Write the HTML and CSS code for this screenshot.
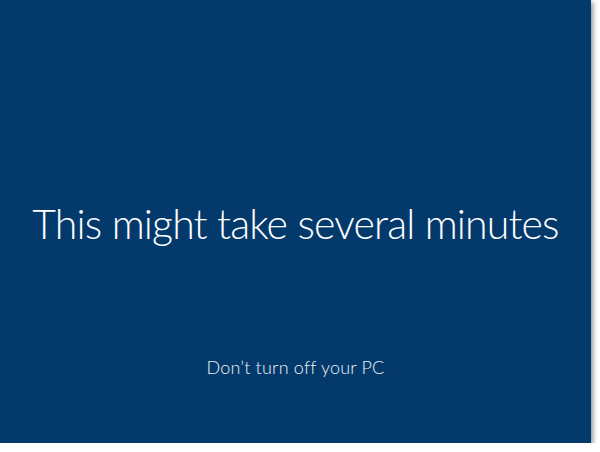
FILE: index.html
```html
<!DOCTYPE html>
<html lang="en">
<head>
    <meta charset="UTF-8">
    <title>This might take several minutes</title>
    <link rel="stylesheet" href="styles.css">
</head>
<body>
    <div class="screen">
        <h1 class="title">This might take several minutes</h1>
        <p class="subtitle">Don’t turn off your PC</p>
    </div>
</body>
</html>
```

FILE: styles.css
```css
body {
    margin: 0;
    background-color: #ffffff;
    font-family: Lato, "Open Sans", sans-serif;
}

.screen {
    width: 591px;
    height: 443px;
    background-color: #033a6b;
    box-shadow: 2px 2px 5px rgba(0, 0, 0, 0.45);
    display: flex;
    flex-direction: column;
    align-items: center;
    box-sizing: border-box;
    padding-top: 192px;
    color: #ffffff;
}

.title {
    margin: 0;
    font-size: 41px;
    font-weight: 300;
    line-height: 64px;
    letter-spacing: -0.85px;
    white-space: nowrap;
}

.subtitle {
    margin: 0;
    margin-top: 98px;
    font-size: 18px;
    font-weight: 300;
    line-height: 26px;
    letter-spacing: 0.2px;
    color: #edf2f7;
    white-space: nowrap;
}
```
